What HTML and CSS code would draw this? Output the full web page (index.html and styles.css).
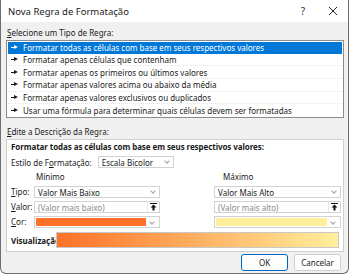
FILE: index.html
```html
<!DOCTYPE html>
<html lang="pt">
<head>
    <meta charset="UTF-8">
    <title>Nova Regra de Formatação</title>
    <link rel="stylesheet" href="styles.css">
</head>
<body>
    <div class="window">
        <div class="titlebar">
            <span class="title">Nova Regra de Formatação</span>
            <span class="tb-btn help">?</span>
            <span class="tb-btn close">
                <svg width="10" height="10" viewBox="0 0 10 10"><path d="M1 1L9 9M9 1L1 9" stroke="#222" stroke-width="1"/></svg>
            </span>
        </div>

        <div class="content">
            <div class="section-label"><u>S</u>elecione um Tipo de Regra:</div>
            <ul class="rule-list">
                <li class="selected"><span class="arrow"></span>Formatar todas as células com base em seus respectivos valores</li>
                <li><span class="arrow"></span>Formatar apenas células que contenham</li>
                <li><span class="arrow"></span>Formatar apenas os primeiros ou últimos valores</li>
                <li><span class="arrow"></span>Formatar apenas valores acima ou abaixo da média</li>
                <li><span class="arrow"></span>Formatar apenas valores exclusivos ou duplicados</li>
                <li><span class="arrow"></span>Usar uma fórmula para determinar quais células devem ser formatadas</li>
            </ul>

            <div class="section-label second"><u>E</u>dite a Descrição da Regra:</div>
            <div class="group">
                <div class="group-title">Formatar todas as células com base em seus respectivos valores:</div>
                <div class="style-row">
                    <span>Estilo de F<u>o</u>rmatação:</span>
                    <div class="select style-select">Escala Bicolor<span class="chev"></span></div>
                </div>

                <div class="grid">
                    <span></span>
                    <span class="col-head">Mínimo</span>
                    <span class="col-head right">Máximo</span>

                    <span class="lbl"><u>T</u>ipo:</span>
                    <div class="select">Valor Mais Baixo<span class="chev"></span></div>
                    <div class="select right">Valor Mais Alto<span class="chev"></span></div>

                    <span class="lbl"><u>V</u>alor:</span>
                    <div class="input">(Valor mais baixo)<span class="ref-btn"><svg width="7" height="8" viewBox="0 0 7 8"><path d="M0 0.5H7" stroke="#111"/><path d="M3.5 1.5L0.5 4.5H2.5V7.5H4.5V4.5H6.5Z" fill="#111"/></svg></span></div>
                    <div class="input right">(Valor mais alto)<span class="ref-btn"><svg width="7" height="8" viewBox="0 0 7 8"><path d="M0 0.5H7" stroke="#111"/><path d="M3.5 1.5L0.5 4.5H2.5V7.5H4.5V4.5H6.5Z" fill="#111"/></svg></span></div>

                    <span class="lbl"><u>C</u>or:</span>
                    <div class="color"><span class="swatch low"></span><span class="chev"></span></div>
                    <div class="color right"><span class="swatch high"></span><span class="chev"></span></div>
                </div>

                <div class="preview-row">
                    <span class="preview-label">Visualização:</span>
                    <div class="preview"></div>
                </div>
            </div>

            <div class="buttons">
                <button class="btn default">OK</button>
                <button class="btn">Cancelar</button>
            </div>
        </div>
    </div>
</body>
</html>
```

FILE: styles.css
```css
* {
    box-sizing: border-box;
}

body {
    margin: 0;
    background: #ffffff;
    font-family: 'Noto Sans', 'Open Sans', sans-serif;
    font-size: 8px;
    color: #1a1a1a;
}

.window {
    width: 349px;
    height: 274px;
    border: 1px solid #6e6e6e;
    border-top: none;
    border-radius: 0 0 6px 6px;
    background: #f0f0f0;
    overflow: hidden;
}

.titlebar {
    height: 22px;
    background: #ffffff;
    display: flex;
    align-items: center;
    padding-left: 7px;
}

.title {
    font-size: 9.5px;
    flex: 1;
}

.tb-btn {
    width: 30px;
    display: flex;
    justify-content: center;
    font-size: 10px;
    color: #333;
}

.content {
    padding: 4px 4px 0 5px;
}

.section-label {
    height: 14px;
    line-height: 13px;
    padding-left: 1px;
}

.second {
    margin-top: 7px;
}

.rule-list {
    list-style: none;
    margin: 0;
    padding: 1px;
    height: 78px;
    background: #ffffff;
    border: 1px solid #8c8c8c;
    display: flex;
    flex-direction: column;
}

.rule-list li {
    flex: 1;
    display: flex;
    align-items: center;
    padding-left: 3px;
    border-bottom: 1px dotted #e6e6e6;
    white-space: nowrap;
}

.rule-list li:last-child {
    border-bottom: none;
}

.rule-list li.selected {
    background: #0078d7;
    color: #ffffff;
    border-bottom: none;
}

.arrow {
    width: 7px;
    height: 5px;
    margin-right: 5px;
    position: relative;
}

.arrow::before {
    content: "";
    position: absolute;
    left: 0;
    top: 2px;
    width: 4px;
    height: 1px;
    background: currentColor;
}

.arrow::after {
    content: "";
    position: absolute;
    left: 3px;
    top: 0;
    border-left: 4px solid currentColor;
    border-top: 2.5px solid transparent;
    border-bottom: 2.5px solid transparent;
}

.group {
    background: #ffffff;
    border: 1px solid #d0d0d0;
    padding: 1px 3px 3px 4px;
}

.group-title {
    font-weight: bold;
    height: 12px;
    line-height: 12px;
    letter-spacing: -0.08px;
}

.style-row {
    display: flex;
    align-items: center;
    gap: 6px;
    margin-top: 3px;
}

.select,
.input,
.color {
    height: 12px;
    border: 1px solid #d2d2d2;
    background: #ffffff;
    display: flex;
    align-items: center;
    padding-left: 3px;
}

.style-select {
    width: 76px;
}

.chev {
    margin-left: auto;
    width: 12px;
    height: 100%;
    position: relative;
}

.chev::after {
    content: "";
    position: absolute;
    left: 4px;
    top: 2px;
    width: 3px;
    height: 3px;
    border-right: 1px solid #a0a0a0;
    border-bottom: 1px solid #a0a0a0;
    transform: rotate(45deg);
}

.grid {
    display: grid;
    grid-template-columns: 23px 126px 181px;
    grid-template-rows: repeat(4, 12px);
    row-gap: 3px;
    margin-top: 3px;
}

.grid .right {
    margin-left: 54px;
}

.col-head {
    padding-left: 2px;
    line-height: 12px;
}

.grid .col-head.right {
    margin-left: 61px;
}

.lbl {
    line-height: 12px;
}

.input {
    color: #8a8a8a;
}

.ref-btn {
    margin-left: auto;
    width: 12px;
    height: 10px;
    border-left: 1px solid #e6e6e6;
    display: flex;
    align-items: center;
    justify-content: center;
}

.color {
    padding: 1px;
}

.swatch {
    flex: 1;
    height: 100%;
}

.swatch.low {
    background: #ff7128;
}

.swatch.high {
    background: #ffef9c;
}

.preview-row {
    display: flex;
    align-items: center;
    margin-top: 4px;
}

.preview-label {
    font-weight: bold;
    width: 45px;
}

.preview {
    flex: 1;
    margin-right: 1px;
    height: 16px;
    border: 1px solid #c8c8c8;
    background: linear-gradient(to right, #ff7128, #ffef9c);
}

.buttons {
    display: flex;
    justify-content: flex-end;
    gap: 6px;
    margin-top: 2px;
    padding-right: 3px;
}

.btn {
    width: 47px;
    height: 17px;
    font-family: inherit;
    font-size: 8px;
    background: #fdfdfd;
    border: 1px solid #d0d0d0;
    border-radius: 3px;
    color: #1a1a1a;
}

.btn.default {
    border: 1px solid #0067c0;
}
```
